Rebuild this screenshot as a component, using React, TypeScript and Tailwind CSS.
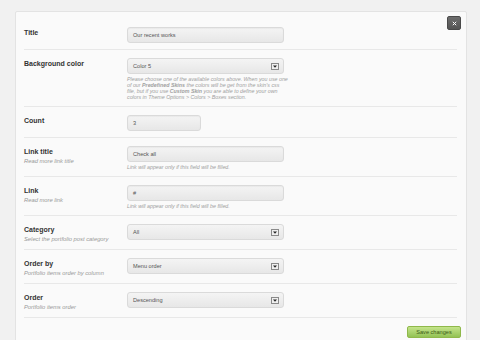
import { ReactNode } from "react";

interface RowProps {
  label: string;
  sub?: string;
  children: ReactNode;
}

function Row({ label, sub, children }: RowProps) {
  return (
    <div className="flex border-b border-[#e8e8e8] pt-[8px] pb-[6px]">
      <div className="w-[103px] shrink-0">
        <div className="text-[7px] leading-[9px] font-bold text-[#333] mt-[1px]">{label}</div>
        {sub && <div className="text-[5.8px] leading-[7px] italic text-[#999] mt-[2px]">{sub}</div>}
      </div>
      <div className="flex-1">{children}</div>
    </div>
  );
}

function Input({ value, width = "w-[157px]" }: { value: string; width?: string }) {
  return (
    <div
      className={`${width} h-[16px] flex items-center px-[5px] rounded-[3px] border border-[#dadada] bg-gradient-to-b from-[#f4f4f4] to-[#e7e7e7] shadow-[inset_0_1px_1px_rgba(0,0,0,0.04)] text-[5.6px] leading-[8px] text-[#555]`}
    >
      {value}
    </div>
  );
}

function Select({ value }: { value: string }) {
  return (
    <div className="w-[157px] h-[16px] flex items-center justify-between pl-[5px] pr-[4px] rounded-[3px] border border-[#dadada] bg-gradient-to-b from-[#f4f4f4] to-[#e7e7e7] text-[5.6px] leading-[8px] text-[#555]">
      <span>{value}</span>
      <span className="w-[8px] h-[7px] flex items-center justify-center border border-[#8a8a8a] bg-[#efefef]">
        <svg width="4" height="3" viewBox="0 0 4 3">
          <path d="M0 0.5 L4 0.5 L2 2.8 Z" fill="#222" />
        </svg>
      </span>
    </div>
  );
}

function Help({ children }: { children: ReactNode }) {
  return <div className="mt-[2px] text-[5.3px] leading-[6px] italic text-[#a0a0a0] whitespace-nowrap">{children}</div>;
}

export default function App() {
  return (
    <div
      className="w-[480px] h-[340px] overflow-hidden bg-[#f1f1f1] pl-[15px] pr-[13px] pt-[11px]"
      style={{ fontFamily: '"Liberation Sans", Arial, sans-serif' }}
    >
      <div className="relative h-[340px] bg-[#fafafa] border border-[#e3e3e3] rounded-[2px] pl-[8px] pr-[9px] pt-[7px]">
        <button className="absolute top-[4px] right-[5px] w-[14px] h-[14px] rounded-[2px] bg-gradient-to-b from-[#6d6d6d] to-[#555] border border-[#4a4a4a] flex items-center justify-center">
          <svg width="5" height="5" viewBox="0 0 5 5">
            <path d="M0.8 0.8 L4.2 4.2 M4.2 0.8 L0.8 4.2" stroke="#fff" strokeWidth="1" />
          </svg>
        </button>

        <Row label="Title">
          <Input value="Our recent works" />
        </Row>

        <div className="flex border-b border-[#e8e8e8] pt-[8px] pb-[6px]">
          <div className="w-[103px] shrink-0 text-[7px] leading-[9px] font-bold text-[#333] mt-[1px]">Background color</div>
          <div className="flex-1">
            <Select value="Color 5" />
            <div className="mt-[2px] text-[5.3px] leading-[6px] italic text-[#a0a0a0] whitespace-nowrap">
              Please choose one of the available colors above. When you use one
              <br />
              of our <b>Predefined Skins</b> the colors will be get from the skin's css
              <br />
              file, but if you use <b>Custom Skin</b> you are able to define your own
              <br />
              colors in Theme Options &gt; Colors &gt; Boxes section.
            </div>
          </div>
        </div>

        <Row label="Count">
          <Input value="3" width="w-[74px]" />
        </Row>

        <Row label="Link title" sub="Read more link title">
          <Input value="Check all" />
          <Help>Link will appear only if this field will be filled.</Help>
        </Row>

        <Row label="Link" sub="Read more link">
          <Input value="#" />
          <Help>Link will appear only if this field will be filled.</Help>
        </Row>

        <Row label="Category" sub="Select the portfolio post category">
          <Select value="All" />
        </Row>

        <Row label="Order by" sub="Portfolio items order by column">
          <Select value="Menu order" />
        </Row>

        <Row label="Order" sub="Portfolio items order">
          <Select value="Descending" />
        </Row>

        <div className="flex justify-end mr-[-4px] mt-[8px]">
          <button className="h-[12px] w-[54px] rounded-[2px] border border-[#8fb84a] bg-gradient-to-b from-[#c4e48a] to-[#93c254] text-[5.6px] leading-[8px] text-[#3c5a14]">
            Save changes
          </button>
        </div>
      </div>
    </div>
  );
}
